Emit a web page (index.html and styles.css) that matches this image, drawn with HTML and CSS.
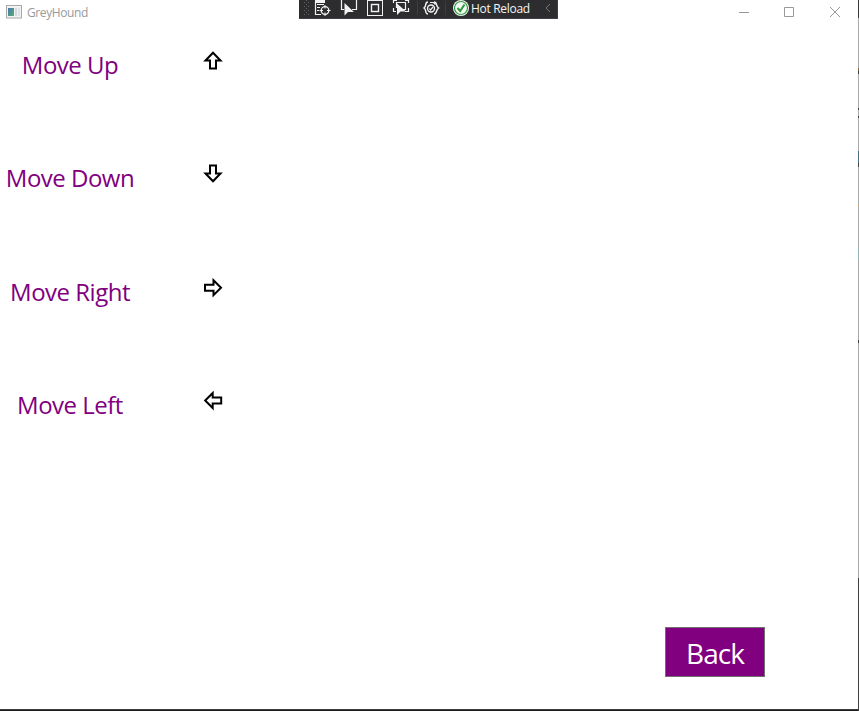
FILE: index.html
```html
<!DOCTYPE html>
<html lang="en">
<head>
<meta charset="utf-8">
<title>GreyHound</title>
<link rel="stylesheet" href="styles.css">
</head>
<body>
<div class="window">
  <header class="titlebar">
    <svg class="app-icon" width="16" height="14" viewBox="0 0 16 14">
      <defs><linearGradient id="g" x1="0" y1="0" x2="1" y2="1"><stop offset="0" stop-color="#4a78b0"/><stop offset="1" stop-color="#58ad72"/></linearGradient></defs>
      <rect x=".5" y=".5" width="15" height="12.5" fill="#f3f3f3" stroke="#a8a8a8"/>
      <rect x="2" y="3" width="6" height="8" fill="url(#g)"/>
      <rect x="9" y="3" width="2" height="8" fill="#d3d8dc"/><rect x="12" y="3" width="2" height="8" fill="#dfe2e4"/>
    </svg>
    <span class="title">GreyHound</span>
    <svg class="controls" width="110" height="14" viewBox="0 0 110 14" fill="none" stroke="#999">
      <path d="M4 7.5H14M49.5 2.5H58.500V11.500H49.500ZM95 2L105 12M105 2L95 12"/>
    </svg>
  </header>
  <div class="debugbar">
    <svg class="tools" width="154" height="18" viewBox="0 0 154 18" fill="none">
      <g fill="#626267"><path d="M5 2h1v1H5zM9 2h1v1H9zM5 6h1v1H5zM9 6h1v1H9zM5 10h1v1H5zM9 10h1v1H9zM5 14h1v1H5zM9 14h1v1H9zM7 0h1v1H7zM7 4h1v1H7zM7 8h1v1H7zM7 12h1v1H7z"/></g>
      <g stroke="#f2f2f2">
        <path d="M16.500 2V14.500H22M18 4.500H25M18 7.500H21M18 10.500H20" stroke-width="1.200"/>
        <path d="M16 0H26V3H16Z" fill="#f2f2f2" stroke="none"/>
        <circle cx="26" cy="10.500" r="3.800" stroke-width="1.300"/><path d="M26 5V8.500M26 12.500V16M20.500 10.500H24M28 10.500H31.500"/>
        <path d="M42.500 0V9.500H45M57.500 0V9.500H53" stroke-width="1.200"/>
        <path d="M45.500 3V15.500L49 12H55Z" fill="#f2f2f2" stroke="none"/>
        <rect x="68.500" y=".5" width="15" height="15"/><rect x="72.500" y="4.500" width="7" height="7" stroke-width="1.400"/>
        <path d="M97.500 8V2.500H106.500V9.500H104M94.500 3V.5H98M106 .5H109.500V3M94.500 8V11.500H97M106 11.500H109.500V8" stroke-width="1.200"/>
        <path d="M98 3.500V15L101.500 11.500H107Z" fill="#f2f2f2" stroke="none"/>
        <path d="M129 2C125.500 2 128 6 125 8C128 10 125.500 14 129 14M135 2C138.500 2 136.500 6 139.500 8C136.500 10 138.500 14 135 14" stroke-width="1.500"/>
        <circle cx="132" cy="8.500" r="3.500" stroke-width="1.400"/><path d="M130.300 8.500L131.500 10L134 7M131 2.500H134.500L136.500 4.500" stroke-width="1.200"/>
      </g>
      <path d="M118.500 1V15M146.500 1V15" stroke="#3d3d42"/>
    </svg>
    <svg class="check" width="16" height="16" viewBox="0 0 16 16" fill="none">
      <circle cx="8" cy="8" r="8" fill="#f4f8f4"/><circle cx="8" cy="8" r="6.500" stroke="#349b42" stroke-width="1.200"/>
      <path d="M4.500 8L7.200 11L11.500 4.500" stroke="#2c983b" stroke-width="2"/>
    </svg>
    <span class="reload">Hot Reload</span>
    <svg class="chevron" width="6" height="10" viewBox="0 0 6 10" fill="none"><path d="M5 1L1 5L5 9" stroke="#77777b"/></svg>
  </div>
  <main class="content">
    <div class="binding"><span class="label up">Move Up</span>
      <svg class="arrow" viewBox="0 0 20 20"><path d="M10 1.800L17.500 9.500H13V17.500H7V9.500H2.500Z"/></svg></div>
    <div class="binding"><span class="label down">Move Down</span>
      <svg class="arrow" viewBox="0 0 20 20"><path d="M10 17.200L17.500 9.500H13V1.500H7V9.500H2.500Z"/></svg></div>
    <div class="binding"><span class="label right">Move Right</span>
      <svg class="arrow" viewBox="0 0 20 20"><path d="M18 9.700L10.500 2.200V6.700H2V12.700H10.500V17.200Z"/></svg></div>
    <div class="binding"><span class="label left">Move Left</span>
      <svg class="arrow" viewBox="0 0 20 20"><path d="M2.200 9.500L9.700 2V6.500H18.200V12.500H9.700V17Z"/></svg></div>
  </main>
  <footer class="footer"><button class="back">Back</button></footer>
</div>
</body>
</html>
```
FILE: styles.css
```css
* { box-sizing: border-box; }
body { margin: 0; overflow: hidden; background: #fff; font-family: "Open Sans", "Noto Sans", sans-serif; }
.window {
  position: relative;
  display: flex;
  flex-direction: column;
  width: 859px;
  height: 711px;
  border: solid;
  border-width: 0 1px 0 0;
  border-image: linear-gradient(#383838 0 19px, #a9a9a9 19px 69px, #85693f 69px 72px, #3d3d3d 72px 75px, #a9a9a9 75px 109px, #444 109px 111px, #a9a9a9 111px 117px, #444 117px 119px, #a9a9a9 119px 152px, #456d80 152px 164px, #444 164px 168px, #a9a9a9 168px 204px, #bda981 204px 207px, #a9a9a9 207px 248px, #91b5b5 248px 260px, #a9a9a9 260px 340px, #444 340px 343px, #a9a9a9 343px 577px, #404040 577px) 1;
}
.window::after { content: ""; height: 2px; flex: none; background: linear-gradient(#403e40 50%, #1c191c 50%); }
.titlebar { display: flex; align-items: center; height: 25px; flex: none; padding-left: 6px; }
.app-icon { flex: none; margin-top: -1px; }
.title { margin-left: 5px; color: #999; font-size: 12px; letter-spacing: -.4px; }
.controls { margin: -2px 13px 0 auto; }
.debugbar {
  position: absolute;
  top: 0;
  left: 299px;
  display: flex;
  width: 259px;
  height: 19px;
  background: #2d2d30;
  border: solid #3f3f46;
  border-width: 0 1px 1px 0;
  color: #f4f4f4;
}
.tools, .check, .chevron { flex: none; }
.reload { width: 74px; margin-left: 2px; font-size: 12px; line-height: 18px; letter-spacing: -.3px; white-space: nowrap; }
.chevron { margin-top: 3px; }
.content { display: grid; grid-template-rows: repeat(4, 113.330px); flex: 1; }
.binding { display: flex; align-items: flex-start; padding-top: 25px; }
.label { width: 140px; margin-top: -1px; text-align: center; white-space: nowrap; color: purple; font-size: 24px; line-height: 32px; letter-spacing: -.5px; }
.arrow { width: 20px; height: 20px; margin: 1px 0 0 63px; fill: none; stroke: #000; stroke-width: 2; }
.footer { display: flex; justify-content: flex-end; flex: none; padding: 0 93px 32px 0; }
.back { width: 100px; height: 50px; padding: 2px 0 0; border: 1px solid #707070; background: purple; color: #fff; font-family: inherit; font-size: 28px; line-height: 46px; letter-spacing: -1px; }
```
